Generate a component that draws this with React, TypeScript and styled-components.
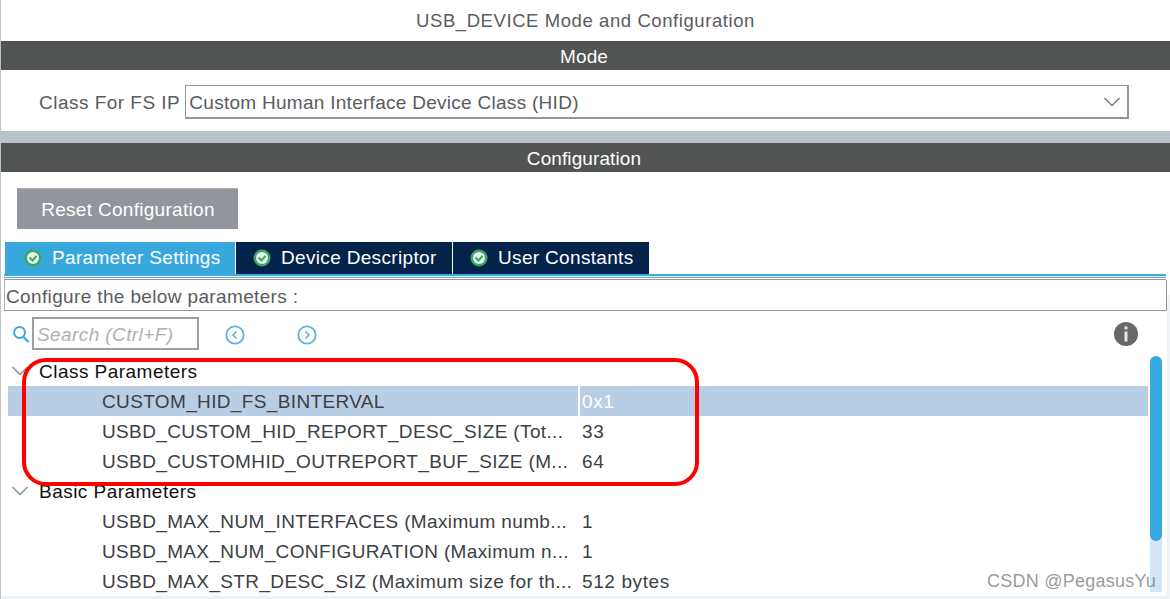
import React from 'react';
import styled, { createGlobalStyle } from 'styled-components';
import { ChevronDown } from 'lucide-react';

const GlobalStyle = createGlobalStyle`
  html, body {
    margin: 0;
    padding: 0;
    background: #ffffff;
    overflow: hidden;
  }
  body {
    font-family: 'Liberation Sans', Arial, sans-serif;
  }
`;

const Page = styled.div`
  position: relative;
  width: 1170px;
  height: 599px;
  box-sizing: border-box;
  border-left: 1px solid #b7c3c9;
  overflow: hidden;
  background: #fff;
  color: #55565a;
`;

const Title = styled.div`
  height: 41px;
  line-height: 42px;
  text-align: center;
  font-size: 18.5px;
  letter-spacing: 0.58px;
  color: #5a5b5e;
`;

const SectionBar = styled.div`
  height: 29px;
  line-height: 31px;
  padding-right: 3px;
  background: #525453;
  color: #fff;
  text-align: center;
  font-size: 19px;
  letter-spacing: 0.1px;
`;

const ModeBody = styled.div`
  height: 61px;
  box-sizing: border-box;
  padding: 15px 41px 0 38px;
  display: flex;
  align-items: flex-start;
  gap: 5px;
`;

const ModeLabel = styled.label`
  font-size: 19px;
  line-height: 36px;
  letter-spacing: 0.48px;
  white-space: nowrap;
  color: #5a5b60;
`;

const SelectBox = styled.div`
  flex: 1;
  height: 34px;
  box-sizing: border-box;
  border: 1px solid #8f969c;
  border-bottom-width: 2px;
  border-right-width: 2px;
  display: flex;
  align-items: center;
  justify-content: space-between;
  padding: 2px 1px 0 3px;
  font-size: 19px;
  letter-spacing: 0.28px;
  color: #5a5b60;
  svg {
    color: #7f8488;
    margin-top: -2px;
  }
`;

const SectionGap = styled.div`
  height: 12px;
  background: #b7c3c9;
  margin-left: -1px;
`;

const ButtonRow = styled.div`
  padding: 16px 0 13px 16px;
`;

const ResetButton = styled.div`
  width: 221px;
  height: 41px;
  line-height: 41px;
  padding-left: 1px;
  background: #90969b;
  border-top: 1px solid #aab0b4;
  box-sizing: border-box;
  color: #fff;
  text-align: center;
  font-size: 19px;
  letter-spacing: 0.3px;
`;

const TabRow = styled.div`
  display: flex;
  gap: 1px;
  height: 32px;
  padding-left: 4px;
`;

const Tab = styled.div<{ $active?: boolean; $width: number }>`
  width: ${p => p.$width}px;
  box-sizing: border-box;
  background: ${p => (p.$active ? '#38a8dc' : '#03234b')};
  color: #fff;
  display: flex;
  align-items: center;
  gap: 10px;
  padding-left: ${p => (p.$active ? 19 : 17)}px;
  font-size: 19px;
  letter-spacing: 0.33px;
  white-space: nowrap;
`;

const TabRule = styled.div`
  margin: 0 4px 0 3px;
  height: 6px;
  box-sizing: border-box;
  border-top: 2px solid #3ca8dc;
  border-bottom: 1px solid #8f969c;
  &::after {
    content: '';
    display: block;
    height: 1px;
    margin-top: 1px;
    background: #60a8d4;
  }
`;

const ConfigureBox = styled.div`
  margin: 0 3px 0 3px;
  height: 31px;
  line-height: 33px;
  box-sizing: border-box;
  border: 1px solid #8f969c;
  border-top: none;
  border-left-color: #a4aaae;
  padding-left: 1px;
  font-size: 19px;
  letter-spacing: 0.36px;
  color: #5a5b60;
`;

const SearchRow = styled.div`
  height: 45px;
  box-sizing: border-box;
  padding: 6px 32px 0 11px;
  display: flex;
  align-items: flex-start;
`;

const SearchGlyph = styled.svg`
  margin-top: 7px;
  flex: none;
`;

const SearchBox = styled.div`
  width: 167px;
  height: 33px;
  line-height: 32px;
  box-sizing: border-box;
  border: 2px solid #9a9fa3;
  margin-left: 2px;
  padding-left: 3px;
  font-style: italic;
  font-size: 19px;
  letter-spacing: 0.4px;
  color: #b0b0b0;
`;

const NavGroup = styled.div`
  display: flex;
  gap: 52px;
  margin: 8px 0 0 26px;
`;

const Spacer = styled.div`
  flex: 1;
`;

const InfoBadge = styled.svg`
  margin-top: 5px;
`;

const TreeArea = styled.div`
  display: flex;
  height: 240px;
  padding-left: 7px;
`;

const Tree = styled.div`
  width: 1140px;
  flex: none;
`;

const GroupRow = styled.div`
  height: 30px;
  line-height: 31px;
  display: flex;
  align-items: center;
  color: #111;
  font-size: 19px;
  letter-spacing: 0.47px;
  gap: 5px;
  svg {
    color: #8d9194;
    flex: none;
    margin-left: -2px;
  }
`;

const ParamRow = styled.div<{ $selected?: boolean }>`
  height: 30px;
  line-height: 31px;
  display: flex;
  background: ${p => (p.$selected ? '#b8cee4' : 'transparent')};
  font-size: 19px;
  letter-spacing: 0.36px;
  color: #3c3f44;
`;

const ParamName = styled.div`
  width: 570px;
  box-sizing: border-box;
  padding-left: 94px;
  white-space: nowrap;
  overflow: hidden;
`;

const ParamValue = styled.div<{ $selected?: boolean }>`
  flex: 1;
  padding-left: 2px;
  letter-spacing: 0.6px;
  border-left: 2px solid ${p => (p.$selected ? '#fff' : 'transparent')};
  color: ${p => (p.$selected ? '#fff' : '#3c3f44')};
`;

const ScrollTrack = styled.div`
  width: 12px;
  margin-left: 2px;
  height: 236px;
  background: #d4e5f4;
  border-radius: 6px 6px 0 0;
`;

const ScrollThumb = styled.div`
  height: 185px;
  background: #36a9de;
  border-radius: 6px;
`;

const BottomEdge = styled.div`
  position: absolute;
  left: 0;
  right: 0;
  bottom: 0;
  height: 3px;
  background: #eef1f4;
`;

const RightEdge = styled.div`
  position: absolute;
  top: 295px;
  right: 0;
  bottom: 0;
  width: 3px;
  background: #f1f2f3;
`;

const Callout = styled.div`
  position: absolute;
  left: 21px;
  top: 358px;
  width: 677px;
  height: 128px;
  box-sizing: border-box;
  border: 4px solid #ff0000;
  border-radius: 24px;
  pointer-events: none;
`;

const Watermark = styled.div`
  position: absolute;
  right: 14px;
  bottom: 7px;
  font-size: 18px;
  letter-spacing: 0.25px;
  color: rgba(120, 120, 120, 0.75);
`;

const CheckIcon = () => (
  <svg width="18" height="18" viewBox="0 0 18 18">
    <circle cx="9" cy="9" r="8.5" fill="#39a866" />
    <circle cx="9" cy="9" r="6" fill="#e6f4ec" />
    <path d="M5.5 8.5 L8.5 11.5 L12.5 6.8" fill="none" stroke="#39a866" strokeWidth="2" />
  </svg>
);

const SearchIcon = () => (
  <SearchGlyph width="18" height="20" viewBox="0 0 18 20">
    <circle cx="7.5" cy="8.5" r="5.5" fill="none" stroke="#3fa9dc" strokeWidth="2" />
    <path d="M11.5 13 L16.5 18" stroke="#3fa9dc" strokeWidth="2.4" />
  </SearchGlyph>
);

const NavIcon = ({ dir }: { dir: 'left' | 'right' }) => (
  <svg width="20" height="20" viewBox="0 0 20 20">
    <circle cx="10" cy="10" r="8.7" fill="none" stroke="#58b4e0" strokeWidth="1.8" />
    <path
      d={dir === 'left' ? 'M11.5 6.5 L8 10 L11.5 13.5' : 'M8.5 6.5 L12 10 L8.5 13.5'}
      fill="none"
      stroke="#58b4e0"
      strokeWidth="1.6"
    />
  </svg>
);

const params = [
  ['CUSTOM_HID_FS_BINTERVAL', '0x1'],
  ['USBD_CUSTOM_HID_REPORT_DESC_SIZE (Tot...', '33'],
  ['USBD_CUSTOMHID_OUTREPORT_BUF_SIZE (M...', '64'],
];

const basics = [
  ['USBD_MAX_NUM_INTERFACES (Maximum numb...', '1'],
  ['USBD_MAX_NUM_CONFIGURATION (Maximum n...', '1'],
  ['USBD_MAX_STR_DESC_SIZ (Maximum size for th...', '512 bytes'],
];

export default function App() {
  return (
    <Page>
      <GlobalStyle />
      <Title>USB_DEVICE Mode and Configuration</Title>
      <SectionBar>Mode</SectionBar>
      <ModeBody>
        <ModeLabel>Class For FS IP</ModeLabel>
        <SelectBox>
          Custom Human Interface Device Class (HID)
          <ChevronDown size={28} strokeWidth={1.5} />
        </SelectBox>
      </ModeBody>
      <SectionGap />
      <SectionBar>Configuration</SectionBar>
      <ButtonRow>
        <ResetButton>Reset Configuration</ResetButton>
      </ButtonRow>
      <TabRow>
        <Tab $active $width={230}>
          <CheckIcon />
          Parameter Settings
        </Tab>
        <Tab $width={216}>
          <CheckIcon />
          Device Descriptor
        </Tab>
        <Tab $width={196}>
          <CheckIcon />
          User Constants
        </Tab>
      </TabRow>
      <TabRule />
      <ConfigureBox>Configure the below parameters :</ConfigureBox>
      <SearchRow>
        <SearchIcon />
        <SearchBox>Search (Ctrl+F)</SearchBox>
        <NavGroup>
          <NavIcon dir="left" />
          <NavIcon dir="right" />
        </NavGroup>
        <Spacer />
        <InfoBadge width="24" height="24" viewBox="0 0 24 24">
          <circle cx="12" cy="12" r="12" fill="#686868" />
          <rect x="10.5" y="4.5" width="3" height="3" fill="#e8e8e8" />
          <rect x="10.5" y="9.5" width="3" height="10" fill="#e8e8e8" />
        </InfoBadge>
      </SearchRow>
      <TreeArea>
        <Tree>
          <GroupRow>
            <ChevronDown size={28} strokeWidth={1.4} />
            Class Parameters
          </GroupRow>
          {params.map(([name, value], i) => (
            <ParamRow key={name} $selected={i === 0}>
              <ParamName>{name}</ParamName>
              <ParamValue $selected={i === 0}>{value}</ParamValue>
            </ParamRow>
          ))}
          <GroupRow>
            <ChevronDown size={28} strokeWidth={1.4} />
            Basic Parameters
          </GroupRow>
          {basics.map(([name, value]) => (
            <ParamRow key={name}>
              <ParamName>{name}</ParamName>
              <ParamValue>{value}</ParamValue>
            </ParamRow>
          ))}
        </Tree>
        <ScrollTrack>
          <ScrollThumb />
        </ScrollTrack>
      </TreeArea>
      <BottomEdge />
      <RightEdge />
      <Callout />
      <Watermark>CSDN @PegasusYu</Watermark>
    </Page>
  );
}
